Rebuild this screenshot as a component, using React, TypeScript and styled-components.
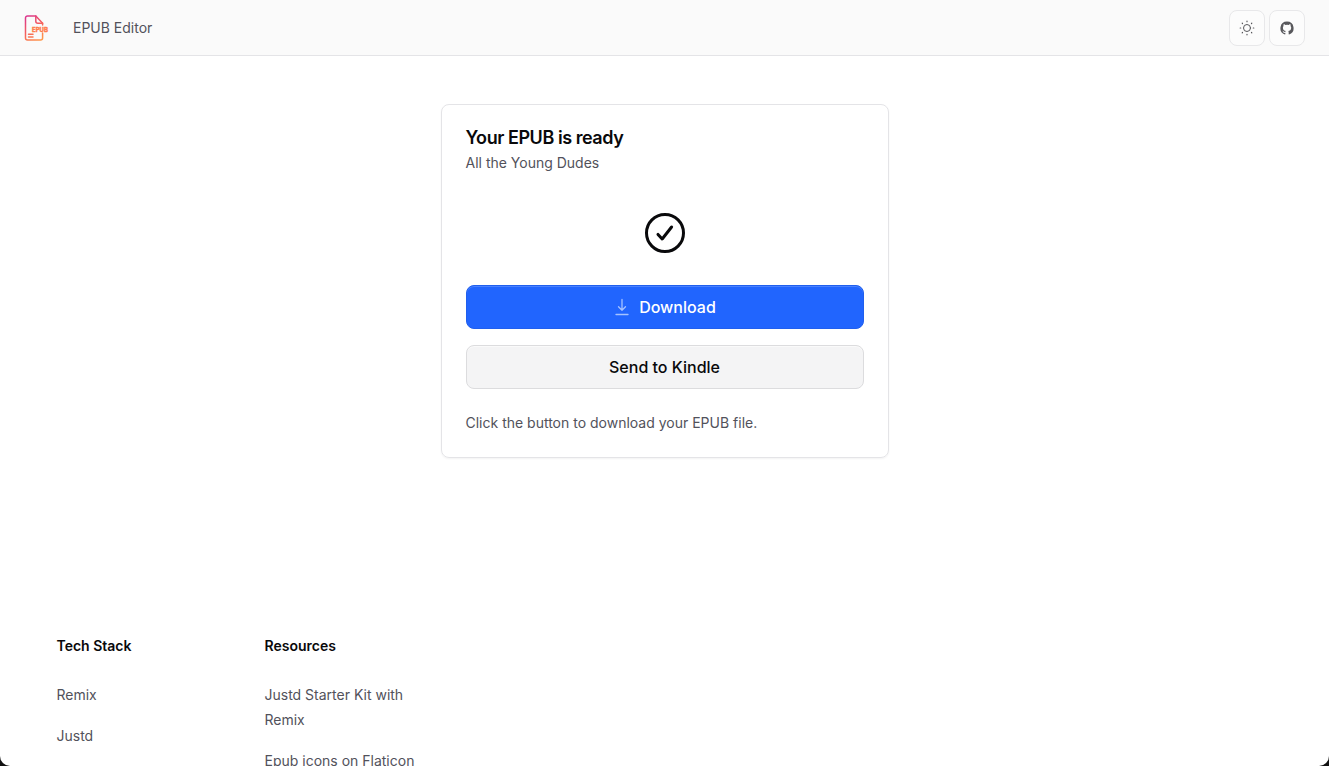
import React from "react";
import styled, { createGlobalStyle, css } from "styled-components";

const GlobalStyle = createGlobalStyle`
  *, *::before, *::after { box-sizing: border-box; }
  html { background: #111; }
  body {
    margin: 0;
    color: #09090b;
    font-family: Inter, "Liberation Sans", sans-serif;
    font-size: 14px;
    line-height: 20px;
    -webkit-font-smoothing: antialiased;
  }
  h1, h2, p, ul { margin: 0; padding: 0; }
`;

const Shell = styled.div`
  height: 100vh;
  overflow: hidden;
  background: #fff;
  border-radius: 0 0 10px 10px;
`;

const Navbar = styled.header`
  display: flex;
  align-items: center;
  justify-content: space-between;
  height: 56px;
  padding: 0 24px;
  background: #fafafa;
  border-bottom: 1px solid #e4e4e7;
`;

const Brand = styled.a`
  display: flex;
  align-items: center;
  gap: 24px;
  color: #52525b;
  text-decoration: none;
`;

const NavActions = styled.div`
  display: flex;
  gap: 4px;
`;

const IconButton = styled.button`
  display: grid;
  place-items: center;
  width: 36px;
  height: 36px;
  padding: 0;
  color: #58585c;
  background: #fcfcfc;
  border: 1px solid #e8e8ea;
  border-radius: 8px;
  cursor: pointer;
`;

const Main = styled.main`
  display: flex;
  justify-content: center;
  padding: 48px 24px 176px;
`;

const Card = styled.section`
  width: 100%;
  max-width: 448px;
  padding: 24px;
  border: 1px solid #e4e4e7;
  border-radius: 8px;
  box-shadow: 0 1px 2px rgba(0, 0, 0, 0.05);
`;

const CardTitle = styled.h1`
  font-size: 18px;
  line-height: 18px;
  font-weight: 600;
  letter-spacing: -0.025em;
`;

const Muted = styled.p`
  color: #52525b;
`;

const CardHeader = styled.div`
  display: flex;
  flex-direction: column;
  gap: 6px;
`;

const CardBody = styled.div`
  display: flex;
  flex-direction: column;
  align-items: center;
  gap: 28px;
  padding: 36px 0 24px;
`;

const Actions = styled.div`
  display: flex;
  flex-direction: column;
  gap: 16px;
  width: 100%;
`;

const ActionButton = styled.button<{ $primary?: boolean }>`
  display: flex;
  align-items: center;
  justify-content: center;
  gap: 8px;
  height: 44px;
  font: 500 16px/24px Inter, "Liberation Sans", sans-serif;
  border: 1px solid #dcdcde;
  border-radius: 8px;
  color: #09090b;
  background: #f4f4f5;
  box-shadow: inset 0 1px 0 #fafafa;
  cursor: pointer;
  ${(p) =>
    p.$primary &&
    css`
      color: #fff;
      background: #2165fe;
      border-color: #205fee;
      box-shadow: inset 0 1px 0 #4a82ff;
    `}
`;

const Footer = styled.footer`
  display: grid;
  grid-template-columns: repeat(6, 1fr);
  gap: 32px;
  max-width: 1280px;
  margin: 0 auto;
  padding: 0 32px 48px;
`;

const FooterTitle = styled.h2`
  font-size: 14px;
  line-height: 24px;
  font-weight: 600;
`;

const LinkList = styled.ul`
  display: flex;
  flex-direction: column;
  gap: 16px;
  margin-top: 24px;
  list-style: none;
  line-height: 25px;
`;

const FooterLink = styled.a`
  color: #52525b;
  text-decoration: none;
`;

const Logo = () => (
  <svg width="25" height="26" viewBox="0 0 25 26" fill="none" aria-hidden="true">
    <defs>
      <linearGradient id="brand" x1="2" y1="1" x2="18" y2="25" gradientUnits="userSpaceOnUse">
        <stop stopColor="#d9338f" />
        <stop offset="0.5" stopColor="#f5605c" />
        <stop offset="1" stopColor="#ff9a4a" />
      </linearGradient>
    </defs>
    <g stroke="url(#brand)" strokeWidth="1.5" strokeLinejoin="round" strokeLinecap="round">
      <path d="M18.6 10V8.2L11.800 1H3.500a2 2 0 0 0-2 2v20a2 2 0 0 0 2 2h13.100a2 2 0 0 0 2-2v-5" />
      <path d="M11.800 1v5.200a2 2 0 0 0 2 2h4.800M4.500 19.300h4.500M4.500 22h4.500" />
    </g>
    <text x="8" y="16.500" fontFamily="Inter, sans-serif" fontSize="6" fontWeight="800" fill="#ff7b48" stroke="#ff7b48" strokeWidth="0.3">
      EPUB
    </text>
  </svg>
);

const SunIcon = () => (
  <svg width="16" height="16" viewBox="0 0 16 16" fill="none" stroke="currentColor" strokeLinecap="round" aria-hidden="true">
    <circle cx="8" cy="8" r="3.5" />
    <path
      strokeWidth="1.2"
      d="M8 1.2v.5M8 14.3v.5M1.2 8h.5M14.3 8h.5M3.2 3.2l.3.3M12.500 12.500l.3.3M3.200 12.800l.3-.3M12.500 3.500l.3-.3"
    />
  </svg>
);

const GithubIcon = () => (
  <svg width="14" height="14" viewBox="0 0 16 16" fill="currentColor" aria-hidden="true">
    <path d="M8 .7a7.5 7.5 0 0 0-2.4 14.6c.4.1.5-.2.5-.4v-1.4c-2.1.5-2.5-.9-2.5-.9-.3-.9-.8-1.1-.8-1.1-.7-.5.1-.5.1-.5.8.1 1.1.8 1.1.8.7 1.1 1.8.8 2.2.6.1-.5.3-.8.5-1-1.7-.2-3.4-.8-3.4-3.7 0-.8.3-1.5.8-2-.1-.2-.3-1 .1-2 0 0 .6-.2 2 .8a7 7 0 0 1 3.7 0c1.4-1 2-.8 2-.8.4 1 .2 1.8.1 2 .5.5.8 1.2.8 2 0 2.9-1.8 3.5-3.4 3.7.3.2.5.7.5 1.4v2.1c0 .2.1.5.5.4A7.5 7.5 0 0 0 8 .7Z" />
  </svg>
);

const CircleCheckIcon = () => (
  <svg width="48" height="48" viewBox="0 0 24 24" fill="none" stroke="currentColor" strokeWidth="1.5" strokeLinecap="round" strokeLinejoin="round" aria-hidden="true">
    <circle cx="12" cy="12" r="9.25" />
    <path d="M8.5 12.7l2.100 2.300 4.700-6" />
  </svg>
);

const DownloadIcon = () => (
  <svg width="18" height="18" viewBox="0 0 18 18" fill="none" stroke="#a5c2ff" strokeWidth="1.3" strokeLinecap="round" strokeLinejoin="round" aria-hidden="true">
    <path d="M9 1.5v10.8M5.500 8.800L9 12.300l3.500-3.500M3 16.500h12" />
  </svg>
);

const footerGroups = [
  { title: "Tech Stack", links: ["Remix", "Justd"] },
  { title: "Resources", links: ["Justd Starter Kit with Remix", "Epub icons on Flaticon"] },
];

export default function App() {
  return (
    <Shell>
      <GlobalStyle />
      <Navbar>
        <Brand href="#">
          <Logo />
          EPUB Editor
        </Brand>
        <NavActions>
          <IconButton type="button" aria-label="Switch theme">
            <SunIcon />
          </IconButton>
          <IconButton type="button" aria-label="View on GitHub">
            <GithubIcon />
          </IconButton>
        </NavActions>
      </Navbar>
      <Main>
        <Card>
          <CardHeader>
            <CardTitle>Your EPUB is ready</CardTitle>
            <Muted>All the Young Dudes</Muted>
          </CardHeader>
          <CardBody>
            <CircleCheckIcon />
            <Actions>
              <ActionButton type="button" $primary>
                <DownloadIcon />
                Download
              </ActionButton>
              <ActionButton type="button">Send to Kindle</ActionButton>
            </Actions>
          </CardBody>
          <Muted>Click the button to download your EPUB file.</Muted>
        </Card>
      </Main>
      <Footer>
        {footerGroups.map((group) => (
          <nav key={group.title} aria-label={group.title}>
            <FooterTitle>{group.title}</FooterTitle>
            <LinkList>
              {group.links.map((link) => (
                <li key={link}>
                  <FooterLink href="#">{link}</FooterLink>
                </li>
              ))}
            </LinkList>
          </nav>
        ))}
      </Footer>
    </Shell>
  );
}
